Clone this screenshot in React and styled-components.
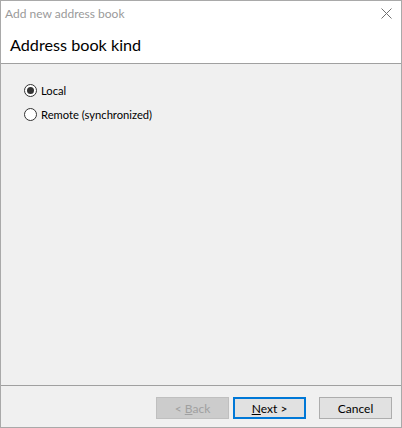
import React from "react";
import styled, { createGlobalStyle } from "styled-components";

const Global = createGlobalStyle`
  html, body { margin: 0; padding: 0; background: #fff; }
  body { font-family: "Lato", "Noto Sans", sans-serif; }
  * { box-sizing: border-box; }
`;

const Window = styled.div`
  width: 402px;
  height: 428px;
  border: 1px solid #a9a9a9;
  display: flex;
  flex-direction: column;
  background: #f0f0f0;
  font-family: "Lato", "Noto Sans", sans-serif;
  font-size: 12px;
  color: #000;
`;

const TitleBar = styled.div`
  height: 24px;
  background: #fff;
  display: flex;
  align-items: center;
  justify-content: space-between;
  padding: 0 9px 0 4px;
  color: #9a9a9a;
  font-size: 12px;
`;

const CloseIcon = styled.svg`
  width: 11px;
  height: 11px;
  display: block;
`;

const Header = styled.div`
  height: 39px;
  background: #fff;
  border-bottom: 1px solid #a0a0a0;
  display: flex;
  align-items: center;
  padding-left: 9px;
  font-size: 16.2px;
  color: #000;
`;

const Content = styled.div`
  flex: 1;
  display: flex;
  flex-direction: column;
  gap: 8px;
  padding: 18px 0 0 23px;
`;

const RadioRow = styled.label`
  display: flex;
  align-items: center;
  gap: 4px;
  height: 16px;
  font-size: 11.2px;
`;

const RadioCircle = styled.span`
  width: 13px;
  height: 13px;
  border-radius: 50%;
  border: 1px solid #333;
  background: #fff;
  display: flex;
  align-items: center;
  justify-content: center;
  &::after {
    content: "";
    width: 7px;
    height: 7px;
    border-radius: 50%;
    background: ${(p) => (p.$checked ? "#333" : "transparent")};
  }
`;

const Footer = styled.div`
  border-top: 1px solid #a0a0a0;
  height: 42px;
  display: flex;
  justify-content: flex-end;
  align-items: flex-start;
  padding: 11px 9px 0 0;
`;

const Button = styled.div`
  width: 73px;
  height: 22px;
  margin-left: ${(p) => p.$ml || 0}px;
  display: flex;
  align-items: center;
  justify-content: center;
  font-size: 12px;
  background: ${(p) => (p.$disabled ? "#cccccc" : "#e1e1e1")};
  color: ${(p) => (p.$disabled ? "#a0a0a0" : "#000")};
  border: ${(p) =>
    p.$default ? "2px solid #0078d7" : p.$disabled ? "1px solid #bfbfbf" : "1px solid #adadad"};
  u { text-decoration: underline; text-underline-offset: 1px; }
`;

export default function App() {
  return (
    <>
      <Global />
      <Window>
        <TitleBar>
          <span>Add new address book</span>
          <CloseIcon viewBox="0 0 11 11">
            <path d="M0.5 0.5 L10.5 10.5 M10.5 0.5 L0.5 10.5" stroke="#707070" strokeWidth="1" />
          </CloseIcon>
        </TitleBar>
        <Header>Address book kind</Header>
        <Content>
          <RadioRow>
            <RadioCircle $checked />
            Local
          </RadioRow>
          <RadioRow>
            <RadioCircle />
            Remote (synchronized)
          </RadioRow>
        </Content>
        <Footer>
          <Button $disabled>
            &lt;&nbsp;<u>B</u>ack
          </Button>
          <Button $default $ml={4}>
            <u>N</u>ext &gt;
          </Button>
          <Button $ml={13}>Cancel</Button>
        </Footer>
      </Window>
    </>
  );
}
